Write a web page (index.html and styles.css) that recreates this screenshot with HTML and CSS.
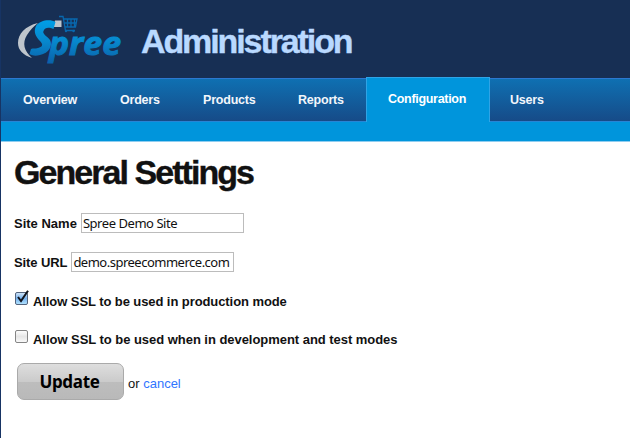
FILE: index.html
```html
<!DOCTYPE html>
<html lang="en">
<head>
<meta charset="utf-8">
<title>Administration</title>
<link rel="stylesheet" href="styles.css">
</head>
<body>
<header class="header">
  <svg class="logo" width="110" height="56" viewBox="16 12 110 56">
    <defs>
      <linearGradient id="blue" gradientUnits="userSpaceOnUse" x1="0" y1="20" x2="0" y2="64">
        <stop offset="0" stop-color="#009fe8"/><stop offset=".5" stop-color="#0787cc"/><stop offset="1" stop-color="#0a60a8"/>
      </linearGradient>
    </defs>
    <path d="M38 23C25 26 18 34 18 43C18 50 23 55 32 58C24 51 22 43 27 35C30 30 34 26 38 23ZM55 20.500H61.500V27H53Z" fill="#bec5cc"/>
    <g fill="none" stroke="#0868ae" stroke-width="1.300">
      <path d="M59 16.500H63L65.500 30.500H75"/>
      <path d="M63.500 19H77L75.500 27H65M64 23H76M67.500 19V27M71 19V27M74.500 19V27"/>
    </g>
    <circle cx="66" cy="31" r="1.200" fill="#0868ae"/><circle cx="73.500" cy="31" r="1.200" fill="#0868ae"/>
    <path d="M55.500 22C50 19 40 20 36 26C33 32 36 37 40 41C44 45 42 47 38 48C35 49 33 48 31 49L29.500 54C33 56 36 56 40 55C49 53 53 46 50 40C47 36 42 34 43.500 31C45 27 49 27 53.500 29Z" fill="url(#blue)"/>
    <text class="logo-text" x="49" y="54.500" textLength="72" lengthAdjust="spacingAndGlyphs" fill="url(#blue)" stroke="url(#blue)">pree</text>
  </svg>
  <h1 class="brand">Administration</h1>
</header>
<nav class="nav">
  <a class="tab overview">Overview</a>
  <a class="tab orders">Orders</a>
  <a class="tab products">Products</a>
  <a class="tab reports">Reports</a>
  <a class="tab active">Configuration</a>
  <a class="tab users">Users</a>
</nav>
<div class="subnav"></div>
<main class="content">
  <h2 class="title">General Settings</h2>
  <form>
    <div class="row"><label for="name">Site Name</label><input class="field" id="name" value="Spree Demo Site"></div>
    <div class="row second"><label for="url">Site URL</label><input class="field" id="url" value="demo.spreecommerce.com"></div>
    <div class="check">
      <svg class="box" width="16" height="17" viewBox="0 0 16 17">
        <defs><linearGradient id="on" x2="0" y2="1"><stop stop-color="#d7e8f8"/><stop offset=".5" stop-color="#78b3ef"/><stop offset="1" stop-color="#b5e5ff"/></linearGradient></defs>
        <rect x="1.500" y="2.500" width="12" height="12" rx="1.500" fill="url(#on)" stroke="#53647e"/>
        <path d="M4 7L7 11L14 .8" fill="none" stroke="#10131b" stroke-width="2"/>
      </svg>
      <span class="check-label">Allow SSL to be used in production mode</span>
    </div>
    <div class="check later">
      <svg class="box" width="16" height="17" viewBox="0 0 16 17">
        <defs><linearGradient id="off" x2="0" y2="1"><stop stop-color="#fff"/><stop offset=".5" stop-color="#e6e6e6"/><stop offset="1" stop-color="#fafafa"/></linearGradient></defs>
        <rect x="1.500" y="2.500" width="12" height="12" rx="1.500" fill="url(#off)" stroke="#858585"/>
      </svg>
      <span class="check-label dev">Allow SSL to be used when in development and test modes</span>
    </div>
    <div class="actions"><button class="update" type="button">Update</button><span class="or">or <a class="cancel">cancel</a></span></div>
  </form>
</main>
</body>
</html>
```
FILE: styles.css
```css
* { box-sizing: border-box; }
body {
  margin: 0;
  height: 438px;
  overflow: hidden;
  border-left: 1px solid #173464;
  background: #fff;
  color: #111;
  font: 13px "Liberation Sans", Arial, sans-serif;
}
.header { height: 77px; margin-left: -1px; padding: 12px 0 0 16px; background: #172f54; display: flex; }
.logo { flex: none; }
.logo-text { font: italic 700 33px "Open Sans", sans-serif; stroke-width: 1px; }
.brand { margin: 9px 0 0 15px; font-size: 34px; line-height: 40px; letter-spacing: -2.1px; color: #b9d9ff; -webkit-text-stroke: .4px #b9d9ff; }
.nav {
  height: 45px;
  display: flex;
  align-items: flex-end;
  background: linear-gradient(#172f54 1px, #2c78d0 1px, #2c78d0 2px, #0f70b2 2px, #164b88 44px, #2685d5 44px);
}
.tab { height: 45px; padding-top: 1px; line-height: 45px; font-size: 12.5px; font-weight: 700; letter-spacing: -.2px; color: #f2f6fb; white-space: nowrap; }
.overview { width: 97px; padding-left: 22px; }
.orders { width: 82px; padding-left: 22px; }
.products { width: 95px; padding-left: 23px; }
.reports { width: 91px; padding-left: 23px; }
.active { width: 124px; padding: 0 0 0 21px; line-height: 43px; background: #0095dc; border: 1px solid #2fa4e6; border-bottom: 0; color: #fff; letter-spacing: -.3px; }
.users { padding-left: 20px; }
.subnav { height: 20px; background: #0095dc; border-bottom: 1px solid #8fcdf0; }
.content { padding: 10px 0 0 13px; }
.title { margin: 0; font-size: 34px; line-height: 40px; letter-spacing: -1.95px; -webkit-text-stroke: .4px #111; }
.row { display: flex; align-items: center; gap: 4px; height: 20px; margin-top: 21px; font-weight: 700; letter-spacing: 0; }
.second { margin-top: 19px; letter-spacing: -.1px; }
.field { width: 163px; height: 20px; margin: 0; padding: 0 1px; border: 1px solid #bcbcbc; background: #fff; color: #111; font: 13px "Noto Sans", sans-serif; letter-spacing: -.45px; outline: 0; }
.second .field { letter-spacing: -.5px; }
.check { display: flex; align-items: center; height: 20px; margin-top: 19px; font-weight: 700; }
.later { margin-top: 18px; }
.box { flex: none; margin: -6px 3px 0 0; }
.check-label { letter-spacing: -.08px; }
.dev { letter-spacing: -.04px; }
.actions { display: flex; align-items: center; margin: 14px 0 0 3px; }
.update { width: 107px; height: 37px; padding: 0 2px 0 0; border: 1px solid #aaa; border-radius: 7px; background: linear-gradient(#dedede, #cbcbcb 50%, #bdbdbd 52%, #b9b9b9); color: #000; font: 700 17px "Noto Sans", sans-serif; letter-spacing: -.3px; }
.or { margin: 3px 0 0 4px; }
.cancel { color: #2f75ff; }
```
